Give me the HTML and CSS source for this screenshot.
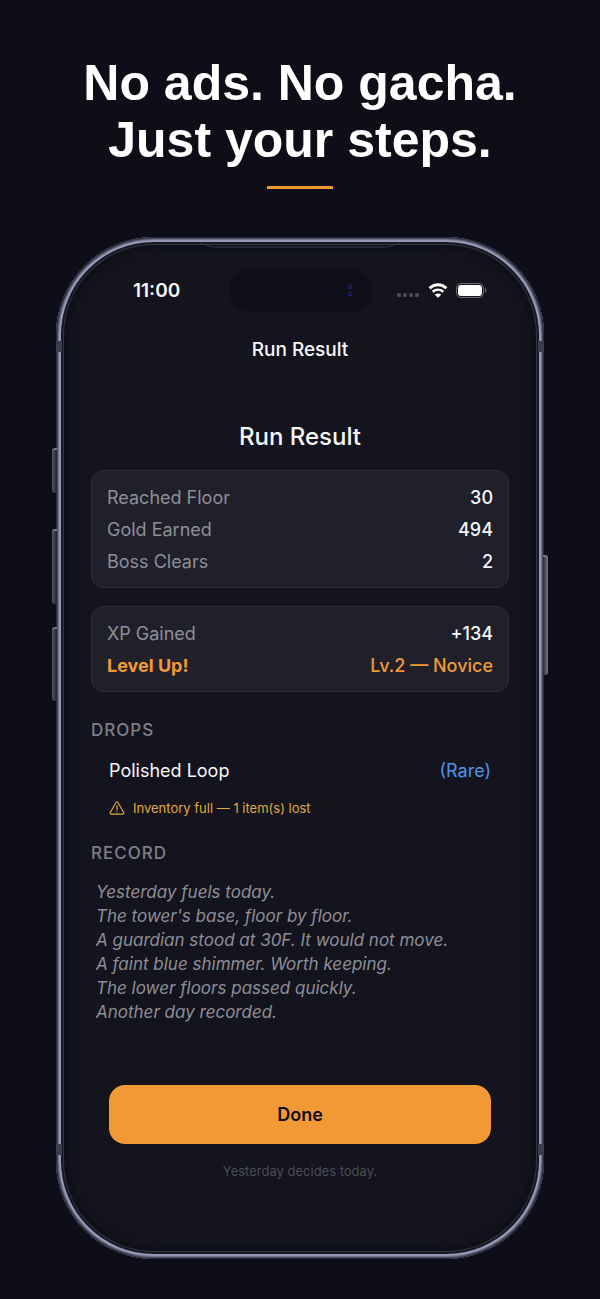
FILE: index.html
```
<!DOCTYPE html>
<html lang="en">
<head>
    <meta charset="UTF-8" />
    <meta name="viewport" content="width=device-width, initial-scale=1">
    <title>Run Result</title>
    <link rel="stylesheet" href="styles.css">
</head>
<body>
    <div class="container">
        <header>
            <h1>No ads. No gacha.<br>Just your steps.</h1>
            <div class="accent-line"></div>
        </header>

        <main class="phone">
            <!-- phone hardware -->
            <span class="side-button action"></span>
            <span class="side-button volume-up"></span>
            <span class="side-button volume-down"></span>
            <span class="side-button power"></span>
            <span class="antenna top"></span>
            <span class="antenna bottom"></span>
            <svg class="earpiece" viewBox="0 0 200 8" aria-hidden="true">
                <path d="M0 1 C8 1 8 4 16 4 H184 C192 4 192 1 200 1" fill="none" stroke="#3a3b43" />
            </svg>

            <div class="status-bar">
                <span class="time">11:00</span>
                <div class="island">
                    <svg width="8" height="13" viewBox="0 0 8 13" aria-hidden="true">
                        <path d="M1 2 Q4 0.5 7 2" fill="none" stroke="#20213f" stroke-width="1.4" />
                        <path d="M2 4 H6 M3 8.5 H5 M2 11 H6" fill="none" stroke="#201c66" stroke-width="2" />
                    </svg>
                </div>
                <div class="status-icons">
                    <svg width="23" height="6" viewBox="0 0 23 6" fill="#494a54" aria-hidden="true">
                        <rect x="0" y="1" width="4" height="4" rx="1.5" />
                        <rect x="6" y="1" width="4" height="4" rx="1.5" />
                        <rect x="12" y="1" width="4" height="4" rx="1.5" />
                        <rect x="18" y="1" width="4" height="4" rx="1.5" />
                    </svg>
                    <svg width="20" height="15" viewBox="0 0 20 15" aria-hidden="true">
                        <path d="M1.6 5.2 C6.4 0.6 13.6 0.6 18.4 5.2" fill="none" stroke="#fff" stroke-width="2.8" />
                        <path d="M4.7 8.8 C7.8 6 12.2 6 15.3 8.8" fill="none" stroke="#fff" stroke-width="2.5" />
                        <path d="M6.8 11.7 C8.6 10.1 11.4 10.1 13.2 11.7 L10 14.8 Z" fill="#fff" />
                    </svg>
                    <svg width="31" height="15" viewBox="0 0 31 15" aria-hidden="true">
                        <rect x="0.5" y="0.5" width="27" height="14" rx="4.5" fill="none" stroke="#6c6d76" />
                        <rect x="2" y="2" width="24" height="11" rx="3.2" fill="#fff" />
                        <path d="M29 5 C31 6 31 9 29 10 Z" fill="#6c6d76" />
                    </svg>
                </div>
            </div>

            <p class="nav-title">Run Result</p>

            <h2>Run Result</h2>

            <dl class="card">
                <div class="row"><dt>Reached Floor</dt><dd>30</dd></div>
                <div class="row"><dt>Gold Earned</dt><dd>494</dd></div>
                <div class="row"><dt>Boss Clears</dt><dd>2</dd></div>
            </dl>

            <dl class="card">
                <div class="row"><dt>XP Gained</dt><dd>+134</dd></div>
                <div class="row level-up"><dt>Level Up!</dt><dd>Lv.2 — Novice</dd></div>
            </dl>

            <h3 class="section-title">DROPS</h3>
            <div class="drop">
                <span>Polished Loop</span>
                <span class="rare">(Rare)</span>
            </div>
            <p class="warning">
                <svg width="16" height="14" viewBox="0 0 16 14" fill="none" stroke="#e0a941" stroke-linecap="round" stroke-linejoin="round" aria-hidden="true">
                    <path d="M7.2 1.3 Q8 0.2 8.8 1.3 L14.8 11.6 Q15.3 13 14 13.1 H2 Q0.7 13 1.2 11.6 Z" stroke-width="1.1" />
                    <path d="M8 4.7 V8.6 M8 10.7 V10.8" stroke-width="1.2" />
                </svg>
                <span>Inventory full — 1 item(s) lost</span>
            </p>

            <h3 class="section-title">RECORD</h3>
            <p class="record">
                Yesterday fuels today.<br>
                The tower's base, floor by floor.<br>
                A guardian stood at 30F. It would not move.<br>
                A faint blue shimmer. Worth keeping.<br>
                The lower floors passed quickly.<br>
                Another day recorded.
            </p>

            <button type="button" class="done">Done</button>
            <p class="tagline">Yesterday decides today.</p>
        </main>
    </div>
</body>
</html>
```
FILE: styles.css
```
:root {
    --background: #0d0e18;
    --screen: #13141d;
    --card: #20202a;
    --accent: #f19a35;
    --text: #f7f7fa;
    --muted: #8e8e96;
}

* {
    box-sizing: border-box;
}

body {
    margin: 0;
    min-height: 100vh;
    background: var(--background);
    color: var(--text);
    font-family: 'Inter', sans-serif;
    font-size: 18px;
}

h1, h2, h3, p, dl, dd {
    margin: 0;
}

.container {
    max-width: 600px;
    margin: 0 auto;
    padding: 55px 56px 40px;
}

header {
    text-align: center;
    margin-bottom: 48px;
}

header h1 {
    font-family: 'Liberation Sans', sans-serif;
    font-size: 50px;
    line-height: 57px;
    font-weight: 700;
    color: #fff;
    margin: 0 -20px;
}

.accent-line {
    width: 66px;
    height: 3px;
    margin: 17px auto 0;
    background: var(--accent);
}

.phone {
    position: relative;
    display: flex;
    flex-direction: column;
    padding: 32px 35px 79px;
    border-radius: 98px;
    background: var(--screen);
    box-shadow:
        inset 0 0 0 1px #272836,
        inset 0 0 0 2px #4b4c60,
        inset 0 0 0 3px #707188,
        inset 0 0 0 5px #9798b6,
        inset 0 0 0 7px #171821,
        inset 0 0 0 8px #33343e,
        inset 0 0 8px 12px #0e0f16;
}

.side-button {
    position: absolute;
    left: -4px;
    width: 5px;
    border-radius: 3px 0 0 3px;
    background: linear-gradient(90deg, #555666, #20212e);
    border-top: 2px solid #777887;
}

.action {
    top: 211px;
    height: 45px;
}

.volume-up {
    top: 292px;
    height: 75px;
}

.volume-down {
    top: 390px;
    height: 74px;
}

.power {
    top: 318px;
    left: auto;
    right: -4px;
    height: 120px;
    border-radius: 0 3px 3px 0;
    background: linear-gradient(270deg, #777886, #292a36);
}

.antenna {
    position: absolute;
    left: 0;
    right: 0;
    height: 11px;
    border: solid #3c3d4f;
    border-width: 0 6px;
}

.antenna.top {
    top: 104px;
}

.antenna.bottom {
    bottom: 104px;
}

.earpiece {
    position: absolute;
    top: 6px;
    left: 50%;
    width: 200px;
    transform: translateX(-50%);
}

.status-bar {
    display: grid;
    grid-template-columns: 1fr 143px 1fr;
    align-items: center;
}

.time {
    padding-left: 42px;
    font-size: 19px;
    font-weight: 600;
}

.island {
    display: flex;
    align-items: center;
    justify-content: flex-end;
    height: 43px;
    padding-right: 18px;
    border-radius: 22px;
    background: #0e0f18;
}

.status-icons {
    display: flex;
    align-items: center;
    justify-content: flex-end;
    gap: 8px;
    padding-right: 22px;
}

.status-icons svg:first-child {
    align-self: flex-end;
}

.nav-title {
    margin-top: 26px;
    font-size: 19px;
    line-height: 24px;
    font-weight: 500;
    text-align: center;
}

h2 {
    margin: 60px 0 18px;
    font-size: 24px;
    line-height: 30px;
    font-weight: 500;
    text-align: center;
}

.card {
    padding: 11px 15px 9px;
    border: 1px solid #2d2d37;
    border-radius: 12px;
    background: var(--card);
}

.card + .card {
    margin-top: 18px;
}

.row {
    display: flex;
    justify-content: space-between;
    line-height: 32px;
}

.row dt {
    color: var(--muted);
}

.row dd {
    font-weight: 500;
}

.level-up dt,
.level-up dd {
    color: var(--accent);
}

.level-up dt {
    font-weight: 700;
}

.section-title {
    margin-top: 28px;
    font-size: 17px;
    line-height: 20px;
    font-weight: 500;
    letter-spacing: 1px;
    color: #7f7f88;
}

.drop {
    display: flex;
    justify-content: space-between;
    margin-top: 19px;
    padding: 0 18px;
    line-height: 24px;
}

.rare {
    color: #4d94e8;
}

.warning {
    display: flex;
    align-items: center;
    gap: 8px;
    margin-top: 15px;
    padding: 0 18px;
    font-size: 13px;
    line-height: 20px;
    color: #e0a941;
}

.warning + .section-title {
    margin-top: 25px;
}

.record {
    margin-top: 17px;
    padding-left: 5px;
    font-size: 17px;
    line-height: 24px;
    font-style: italic;
    color: var(--muted);
}

.done {
    height: 59px;
    margin: 61px 18px 0;
    border: none;
    border-radius: 16px;
    background: var(--accent);
    color: #0c0c12;
    font: 600 18px 'Inter', sans-serif;
    cursor: pointer;
}

.tagline {
    margin-top: 18px;
    font-size: 13px;
    line-height: 18px;
    text-align: center;
    color: #4b4c55;
}
```
